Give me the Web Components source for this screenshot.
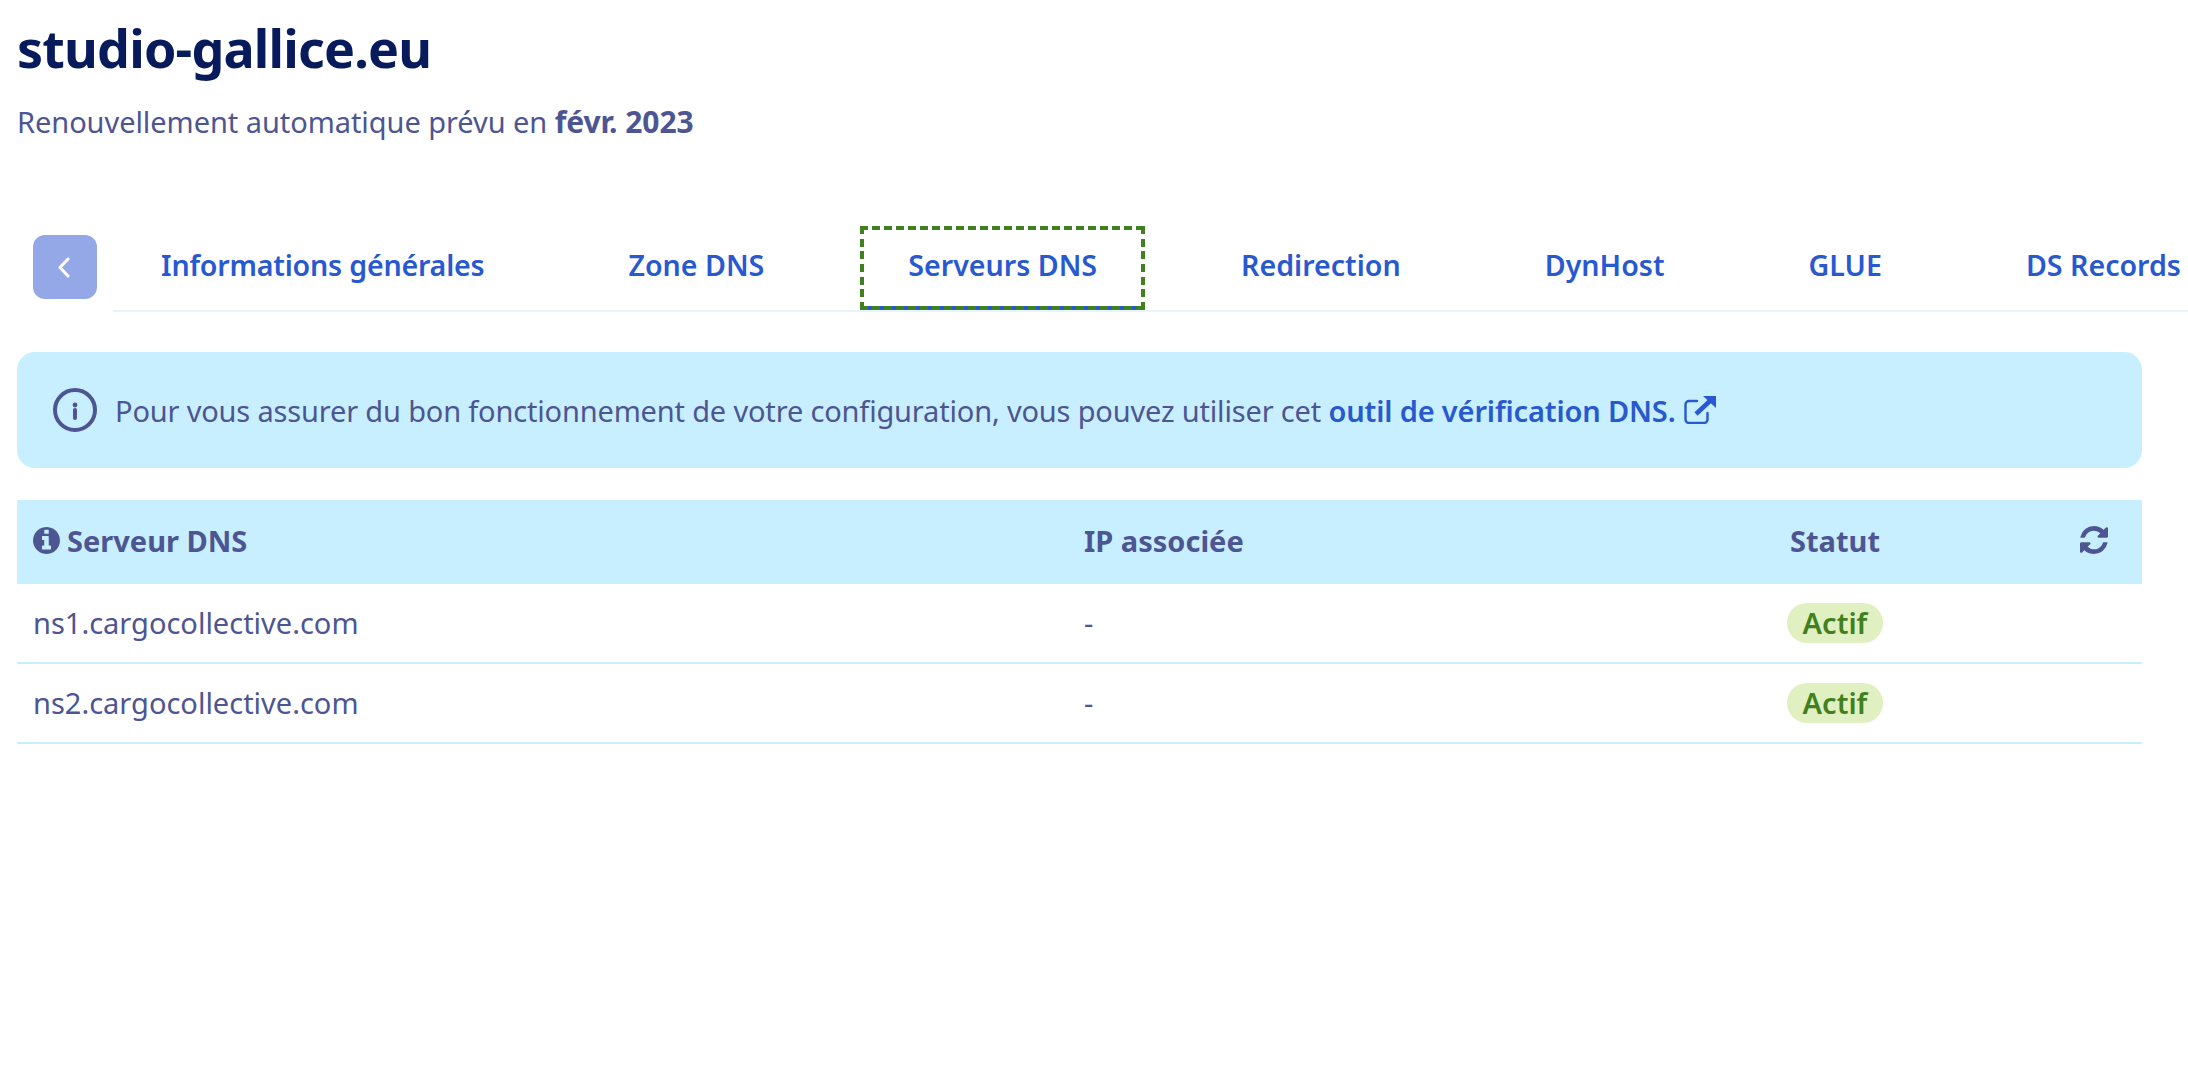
<!doctype html>
<html lang="fr">
<head>
<meta charset="utf-8">
<title>studio-gallice.eu</title>
<style>
  html, body { margin: 0; background: #fff; }
  body {
    font-family: "Noto Sans", "Open Sans", sans-serif;
    color: #4d5592;
    overflow: hidden;
  }
</style>
</head>
<body>
<domain-page>
  <page-header slot="header" name="studio-gallice.eu">Renouvellement automatique prévu en <b>févr. 2023</b></page-header>
  <tab-bar slot="tabs">
    <tab-item style="letter-spacing: -0.2px">Informations générales</tab-item>
    <tab-item>Zone DNS</tab-item>
    <tab-item active>Serveurs DNS</tab-item>
    <tab-item>Redirection</tab-item>
    <tab-item>DynHost</tab-item>
    <tab-item>GLUE</tab-item>
    <tab-item>DS Records</tab-item>
  </tab-bar>
  <info-alert slot="alert">Pour vous assurer du bon fonctionnement de votre configuration, vous pouvez utiliser cet <a href="#">outil de vérification DNS.</a></info-alert>
  <dns-table slot="table">
    <dns-row server="ns1.cargocollective.com" ip="-" status="Actif"></dns-row>
    <dns-row server="ns2.cargocollective.com" ip="-" status="Actif"></dns-row>
  </dns-table>
</domain-page>

<script>
function define(name, html, extra) {
  const template = document.createElement("template");
  template.innerHTML = html;
  customElements.define(name, class extends HTMLElement {
    constructor() {
      super();
      this.attachShadow({ mode: "open" }).appendChild(template.content.cloneNode(true));
    }
    connectedCallback() {
      if (extra) extra(this);
    }
  });
}

define("domain-page", `<style>
    :host { display: block; padding: 0 46px 0 17px; }
    .tabs { display: block; margin: 0 -46px 40px 16px; }
    .alert { display: block; margin-bottom: 32px; }
  </style>
  <slot name="header"></slot>
  <div class="tabs"><slot name="tabs"></slot></div>
  <div class="alert"><slot name="alert"></slot></div>
  <slot name="table"></slot>`);

define("page-header", `<style>
    :host { display: block; padding: 14px 0 84px; }
    h1 { margin: 0 0 20px; font-size: 52px; line-height: 68px; font-weight: 700; color: #061a5c; letter-spacing: -0.8px; }
    p { margin: 0; font-size: 29px; line-height: 40px; letter-spacing: -0.06px; }
    ::slotted(b) { font-weight: 700; font-size: 30px; }
  </style>
  <h1></h1>
  <p><slot></slot></p>`, (el) => {
    el.shadowRoot.querySelector("h1").textContent = el.getAttribute("name");
  });

define("tab-bar", `<style>
    :host { display: flex; align-items: flex-start; gap: 16px; }
    button {
      flex: none; width: 64px; height: 64px; margin-top: 9px; padding: 0; border: 0;
      border-radius: 12px; background: #94a8e8; display: flex; align-items: center; justify-content: center;
    }
    button svg { margin-right: 3px; }
    .strip {
      flex: 1; min-width: 0; display: flex; gap: 48px; overflow: hidden;
      border-bottom: 2px solid #e8f3fb;
    }
  </style>
  <button aria-label="Précédent">
    <svg width="13" height="21" viewBox="0 0 13 21"><path d="M11 2 3 10.5 11 19" fill="none" stroke="#fff" stroke-width="3" stroke-linecap="round" stroke-linejoin="round"/></svg>
  </button>
  <div class="strip"><slot></slot></div>`);

// dashes are gradients: the browser's own dashed border has a shorter pattern than the reference
const dashX = "repeating-linear-gradient(90deg, #41801f 0 8px, transparent 8px 12px)";
const dashY = "repeating-linear-gradient(180deg, #41801f 0 8px, transparent 8px 12.667px)";

define("tab-item", `<style>
    :host {
      flex: none; display: block; box-sizing: border-box; height: 84px; padding: 0 44px;
      border: 4px solid transparent; font-size: 28.6px; line-height: 70px; font-weight: 600;
      color: #2859d0; white-space: nowrap;
    }
    :host([active]) {
      background:
        ${dashX} top / 100% 4px no-repeat,
        ${dashX} bottom / 100% 4px no-repeat,
        ${dashY} left / 4px 100% no-repeat,
        ${dashY} right / 4px 100% no-repeat,
        linear-gradient(#2859d0, #2859d0) bottom / 100% 4px no-repeat;
      background-origin: border-box;
      background-clip: border-box;
    }
  </style>
  <slot></slot>`);

define("info-alert", `<style>
    :host {
      display: flex; align-items: center; gap: 18px; box-sizing: border-box; height: 116px;
      padding: 0 36px; border-radius: 18px; background: #c8efff;
      font-size: 29px; letter-spacing: -0.17px;
    }
    svg { flex: none; }
    ::slotted(a) { color: #2859d0; font-weight: 600; text-decoration: none; letter-spacing: -0.15px; }
    .text { display: flex; align-items: center; gap: 8px; white-space: nowrap; }
  </style>
  <svg width="44" height="44" viewBox="0 0 44 44" fill="none">
    <circle cx="22" cy="22" r="20" stroke="#4d5592" stroke-width="4"/>
    <circle cx="22" cy="17" r="2.4" fill="#4d5592"/>
    <path d="M22 22v8" stroke="#4d5592" stroke-width="4" stroke-linecap="round"/>
  </svg>
  <div class="text"><span><slot></slot></span>
    <svg width="32" height="28" viewBox="0 0 32 28" fill="none" stroke="#2859d0">
      <path d="M13 5H5a3.500 3.500 0 0 0-3.500 3.500v15A3.500 3.500 0 0 0 5 27h15a3.500 3.500 0 0 0 3.500-3.500V17" stroke-width="2.400" stroke-linecap="round"/>
      <path d="M12 18 27 4" stroke-width="4.500"/>
      <path d="M19 0h13v12z" fill="#2859d0" stroke="none"/>
    </svg>
  </div>`);

const columns = "1051px 667px 200px 207px";

define("dns-table", `<style>
    :host { display: block; --cols: ${columns}; }
    .head {
      display: grid; grid-template-columns: var(--cols); align-items: center; height: 84px;
      background: #c8efff; font-size: 29px; line-height: 40px; font-weight: 700;
    }
    .head > div { padding-left: 16px; }
    .head svg { margin-bottom: 4px; }
    .label { position: relative; top: -1px; }
    .first { display: flex; align-items: center; gap: 7px; }
    .status { text-align: center; padding-left: 0 !important; }
    .refresh { display: flex; justify-content: flex-end; padding-right: 34px; }
  </style>
  <div class="head">
    <div class="first">
      <svg width="27" height="27" viewBox="0 128 1536 1536" fill="#4d5592"><path d="M1024 1376v-160q0-14-9-23t-23-9h-96v-512q0-14-9-23t-23-9h-320q-14 0-23 9t-9 23v160q0 14 9 23t23 9h96v320h-96q-14 0-23 9t-9 23v160q0 14 9 23t23 9h448q14 0 23-9t9-23zm-128-896v-160q0-14-9-23t-23-9h-192q-14 0-23 9t-9 23v160q0 14 9 23t23 9h192q14 0 23-9t9-23zm640 416q0 209-103 385.500t-279.500 279.500-385.500 103-385.500-103-279.500-279.500-103-385.500 103-385.500 279.500-279.500 385.500-103 385.500 103 279.500 279.500 103 385.500z"/></svg>
      <span class="label">Serveur DNS</span>
    </div>
    <div><span class="label">IP associée</span></div>
    <div class="status"><span class="label">Statut</span></div>
    <div class="refresh">
      <svg width="28" height="28" viewBox="0 128 1536 1536" fill="#4d5592"><path d="M1511 1056q0 5-1 7-64 268-268 434.500t-478 166.500q-146 0-282.500-55t-243.500-157l-129 129q-19 19-45 19t-45-19-19-45v-448q0-26 19-45t45-19h448q26 0 45 19t19 45-19 45l-137 137q71 66 161 102t187 36q134 0 250-65t186-179q11-17 53-117 8-23 30-23h192q13 0 22.500 9.500t9.500 22.500zm25-800v448q0 26-19 45t-45 19h-448q-26 0-45-19t-19-45 19-45l138-138q-148-137-349-137-134 0-250 65t-186 179q-11 17-53 117-8 23-30 23h-199q-13 0-22.500-9.500t-9.500-22.500v-7q65-268 270-434.500t480-166.500q146 0 284 55.500t245 156.500l130-129q19-19 45-19t45 19 19 45z"/></svg>
    </div>
  </div>
  <slot></slot>`);

define("dns-row", `<style>
    :host {
      display: grid; grid-template-columns: var(--cols); align-items: center; box-sizing: border-box;
      height: 80px; border-bottom: 2px solid #c8efff; font-size: 29px; line-height: 40px;
    }
    .cell { padding-left: 16px; }
    .status { display: flex; justify-content: center; }
  </style>
  <div class="cell server"></div>
  <div class="cell ip"></div>
  <div class="status"><status-pill></status-pill></div>
  <div></div>`, (el) => {
    const root = el.shadowRoot;
    root.querySelector(".server").textContent = el.getAttribute("server");
    root.querySelector(".ip").textContent = el.getAttribute("ip");
    root.querySelector("status-pill").textContent = el.getAttribute("status");
  });

define("status-pill", `<style>
    :host {
      display: block; box-sizing: border-box; width: 96px; height: 40px; border-radius: 20px;
      background: #e0f0c0; color: #41801f; font-size: 29px; line-height: 40px; font-weight: 600;
      text-align: center;
    }
  </style>
  <slot></slot>`);
</script>
</body>
</html>
